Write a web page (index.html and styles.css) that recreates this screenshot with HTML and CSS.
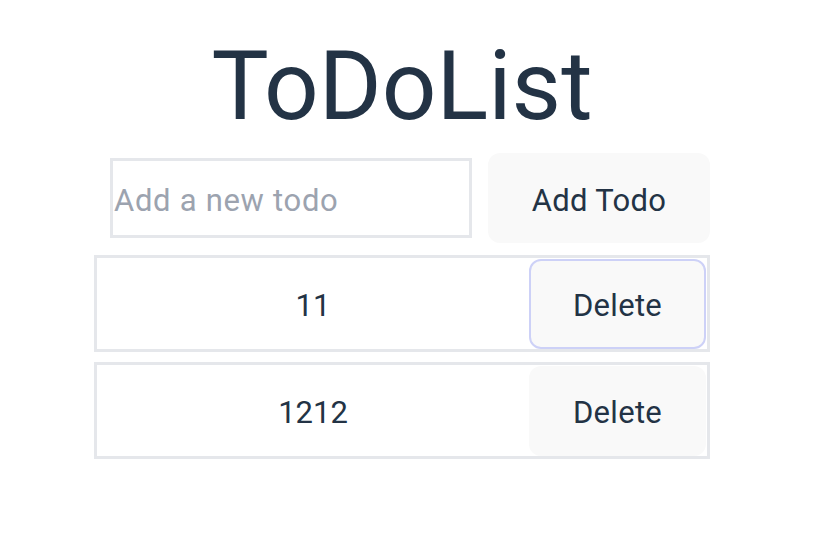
FILE: index.html
```html
<!DOCTYPE html>
<html lang="en">
<head>
<meta charset="utf-8">
<title>ToDoList</title>
<link rel="stylesheet" href="styles.css">
</head>
<body>
<div class="app">
  <h1 class="title">ToDoList</h1>
  <form class="add-form">
    <input class="add-input" type="text" placeholder="Add a new todo">
    <button class="btn add-btn" type="button">Add Todo</button>
  </form>
  <ul class="todo-list">
    <li class="todo-item">
      <span class="todo-text">11</span>
      <button class="btn delete-btn focused" type="button">Delete</button>
    </li>
    <li class="todo-item">
      <span class="todo-text">1212</span>
      <button class="btn delete-btn" type="button">Delete</button>
    </li>
  </ul>
</div>
</body>
</html>
```
FILE: styles.css
```css
html, body {
  margin: 0;
  padding: 0;
  background: #ffffff;
}

body {
  font-family: Roboto, "Liberation Sans", sans-serif;
  color: #233345;
}

.app {
  width: 616px;
  margin-left: 94px;
  display: flex;
  flex-direction: column;
  align-items: stretch;
}

.title {
  margin: 30px 0 0 0;
  text-align: center;
  font-size: 96px;
  font-weight: 400;
  line-height: 112px;
  color: #233345;
}

.add-form {
  display: flex;
  align-items: center;
  gap: 16px;
  margin: 11px 0 0 16px;
}

.add-input {
  box-sizing: border-box;
  width: 362px;
  height: 80px;
  border: 3px solid #e5e7eb;
  border-radius: 0;
  padding: 4px 1px 0 1px;
  font-family: Roboto, "Liberation Sans", sans-serif;
  font-size: 31px;
  letter-spacing: 0.7px;
  color: #233345;
  outline: none;
}

.add-input::placeholder {
  color: #9ca3af;
}

.btn {
  box-sizing: border-box;
  height: 90px;
  border: 2px solid transparent;
  border-radius: 12px;
  background: #f9f9f9;
  font-family: Roboto, "Liberation Sans", sans-serif;
  font-size: 31px;
  letter-spacing: 0.3px;
  color: #233345;
  padding: 4px 0 0 0;
  cursor: pointer;
}

.add-btn {
  flex: 1;
}

.todo-list {
  list-style: none;
  margin: 12px 0 0 0;
  padding: 0;
  display: flex;
  flex-direction: column;
  gap: 10px;
}

.todo-item {
  box-sizing: border-box;
  height: 97px;
  border: 3px solid #e5e7eb;
  display: flex;
  align-items: center;
  padding: 0 1px 0 0;
}

.todo-text {
  flex: 1;
  text-align: center;
  font-size: 31px;
  padding-top: 4px;
}

.delete-btn {
  width: 177px;
}

.delete-btn.focused {
  border-color: #cdd1f7;
}
```
